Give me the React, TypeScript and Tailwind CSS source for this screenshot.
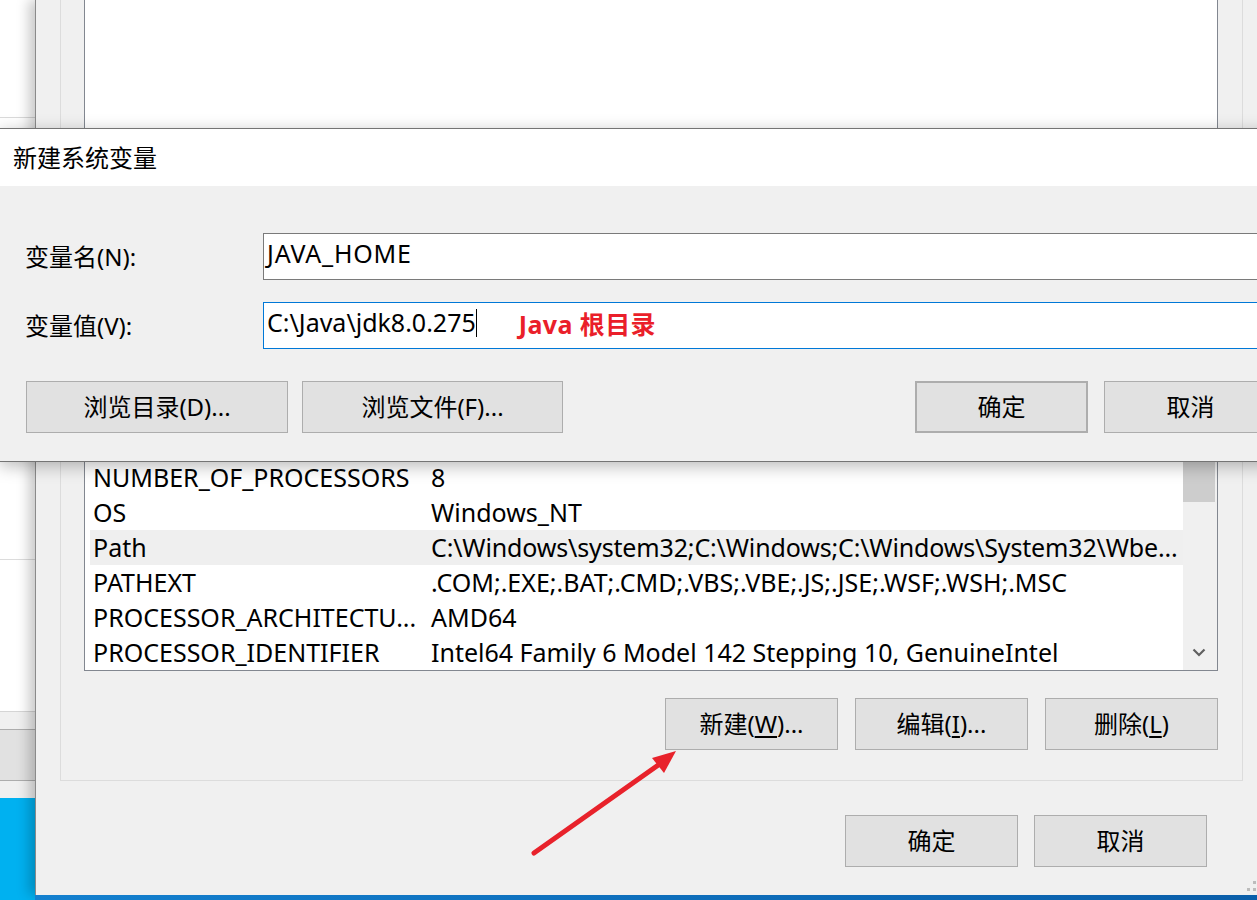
const rows = [
  { name: 'NUMBER_OF_PROCESSORS', value: '8' },
  { name: 'OS', value: 'Windows_NT' },
  { name: 'Path', value: 'C:\\Windows\\system32;C:\\Windows;C:\\Windows\\System32\\Wbe...', hover: true },
  { name: 'PATHEXT', value: '.COM;.EXE;.BAT;.CMD;.VBS;.VBE;.JS;.JSE;.WSF;.WSH;.MSC' },
  { name: 'PROCESSOR_ARCHITECTU...', value: 'AMD64' },
  { name: 'PROCESSOR_IDENTIFIER', value: 'Intel64 Family 6 Model 142 Stepping 10, GenuineIntel' },
];

function WinButton({ children, className = '' }: { children: React.ReactNode; className?: string }) {
  return (
    <div
      className={`h-[52px] shrink-0 flex items-center justify-center bg-[#e1e1e1] border border-[#adadad] text-[24px] text-black ${className}`}
    >
      {children}
    </div>
  );
}

// the window peeking out on the far left
function BackWindow() {
  return (
    <div className="absolute left-0 top-0 w-[40px] h-[798px] flex flex-col bg-white">
      <div className="h-[117px]" />
      <div className="h-px bg-[#dadada]" />
      <div className="h-[441px]" />
      <div className="h-px bg-[#dcdcdc]" />
      <div className="h-[151px]" />
      <div className="h-px bg-[#d5d5d5]" />
      <div className="h-[17px] bg-[#f0f0f0]" />
      <div className="h-px bg-[#adadad]" />
      <div className="h-[50px] bg-[#e1e1e1]" />
      <div className="h-px bg-[#adadad]" />
      <div className="h-[17px] bg-[#f0f0f0]" />
    </div>
  );
}

function EnvWindow() {
  return (
    <div className="absolute left-[35px] top-0 w-[1225px] h-[895px] bg-[#f0f0f0] border-l border-[#8a8a8a] shadow-[-6px_0_12px_rgba(0,0,0,0.22)] flex flex-col">
      <div className="ml-[24px] w-[1183px] h-[781px] border-x border-b border-[#dcdcdc] pl-[23px] pr-[23px] flex flex-col">
        {/* user variables list (mostly covered) */}
        <div className="w-[1134px] h-[200px] bg-white border-x border-b border-[#828790]" />
        <div className="h-[40px]" />
        {/* system variables list */}
        <div className="w-[1134px] h-[431px] bg-white border border-[#828790] flex">
          <div className="w-[1098px] pl-[5px] flex flex-col justify-end overflow-hidden">
            {rows.map((r) => (
              <div
                key={r.name}
                className={`h-[35px] shrink-0 flex items-center text-[25px] text-black whitespace-nowrap ${r.hover ? 'bg-[#efefef]' : ''}`}
              >
                <div className="w-[341px] shrink-0 pl-[3px] overflow-hidden">{r.name}</div>
                <div className={`flex-1 ${r.hover ? 'tracking-[-0.15px]' : ''}`}>{r.value}</div>
              </div>
            ))}
          </div>
          <div className="w-[34px] bg-[#f0f0f0] flex flex-col">
            <div className="w-[32px] h-[261px] bg-[#cdcdcd]" />
            <div className="flex-1" />
            <div className="h-[34px] flex items-center justify-center pr-[2px] pb-[2px]">
              <svg width="14" height="9" viewBox="0 0 14 9">
                <path d="M1.5 1.5 L7 7 L12.5 1.5" fill="none" stroke="#606060" strokeWidth="2.2" />
              </svg>
            </div>
          </div>
        </div>
        <div className="mt-[27px] flex justify-end gap-[17px] pr-[1px]">
          <WinButton className="w-[173px]">
            新建(<span className="underline underline-offset-[3px]">W</span>)...
          </WinButton>
          <WinButton className="w-[173px]">
            编辑(<span className="underline underline-offset-[3px]">I</span>)...
          </WinButton>
          <WinButton className="w-[173px]">
            删除(<span className="underline underline-offset-[3px]">L</span>)
          </WinButton>
        </div>
      </div>
      <div className="mt-[34px] flex justify-end gap-[16px] pr-[53px]">
        <WinButton className="w-[173px]">确定</WinButton>
        <WinButton className="w-[173px]">取消</WinButton>
      </div>
      <div className="flex-1" />
      {/* size grip */}
      <div className="absolute right-[4px] bottom-[4px] flex flex-col items-end gap-[4px]">
        <div className="w-[3px] h-[3px] bg-[#bcbcbc]" />
        <div className="flex gap-[3px]">
          <div className="w-[3px] h-[3px] bg-[#bcbcbc]" />
          <div className="w-[3px] h-[3px] bg-[#bcbcbc]" />
        </div>
      </div>
    </div>
  );
}

function NewVarDialog() {
  return (
    <div className="absolute left-0 top-[128px] w-[1300px] h-[334px] bg-[#f0f0f0] border-y border-[#747474] shadow-[0_4px_16px_rgba(0,0,0,0.28)] flex flex-col">
      <div className="h-[57px] bg-white flex items-center pl-[13px] text-[24px] text-black">新建系统变量</div>
      <div className="flex-1 pl-[25px] pt-[47px] flex flex-col">
        <div className="flex items-center h-[47px]">
          <div className="w-[238px] shrink-0 text-[24px] text-black">变量名(N):</div>
          <div className="w-[1100px] shrink-0 h-[47px] bg-white border border-[#7a7a7a] flex items-center pl-[3px] pb-[6px] text-[25px] tracking-[0.8px] text-black">
            JAVA_HOME
          </div>
        </div>
        <div className="flex items-center h-[47px] mt-[22px]">
          <div className="w-[238px] shrink-0 text-[24px] text-black">变量值(V):</div>
          <div className="w-[1100px] shrink-0 h-[47px] bg-white border border-[#0078d7] flex items-center pl-[3px] pb-[6px] text-[25px] text-black">
            <span>C:\Java\jdk8.0.275</span>
            <span className="w-px h-[28px] bg-black" />
            <span className="ml-[42px] mt-[4px] text-[25px] tracking-[0.4px] font-bold text-[#ea1f2a]">Java 根目录</span>
          </div>
        </div>
        <div className="flex mt-[32px]">
          <WinButton className="ml-[1px] w-[262px]">浏览目录(D)...</WinButton>
          <WinButton className="ml-[14px] w-[261px]">浏览文件(F)...</WinButton>
          <WinButton className="ml-[352px] w-[173px] border-2 border-[#0078d7]">确定</WinButton>
          <WinButton className="ml-[16px] w-[173px]">取消</WinButton>
        </div>
      </div>
    </div>
  );
}

export default function App() {
  return (
    <div className="relative w-[1257px] h-[900px] overflow-hidden bg-[#00b1f0] font-['Noto_Sans','Noto_Sans_CJK_SC',sans-serif]">
      <BackWindow />
      <EnvWindow />
      <div className="absolute left-[35px] top-[895px] w-[1222px] h-[5px] bg-gradient-to-r from-[#1380cf] to-[#0a5ea9]" />
      <NewVarDialog />
      <svg className="absolute left-0 top-0 pointer-events-none" width="1257" height="900" viewBox="0 0 1257 900">
        <line x1="534" y1="853" x2="664" y2="761" stroke="#e8222b" strokeWidth="5" strokeLinecap="round" />
        <polygon points="676,751 652,758 664,773" fill="#e8222b" />
      </svg>
    </div>
  );
}
